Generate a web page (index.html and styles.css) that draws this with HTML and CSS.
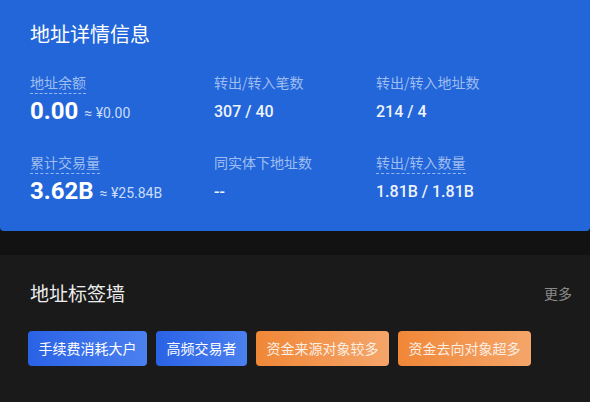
FILE: index.html
```html
<!DOCTYPE html>
<html lang="zh">
<head>
<meta charset="utf-8">
<link rel="stylesheet" href="styles.css">
</head>
<body>
<section class="detail">
  <h1 class="title">地址详情信息</h1>
  <div class="grid">
    <div class="cell">
      <div class="label dashed">地址余额</div>
      <div class="value"><span class="big">0.00</span><span class="approx">≈ ¥0.00</span></div>
    </div>
    <div class="cell">
      <div class="label">转出/转入笔数</div>
      <div class="value"><span class="mid">307 / 40</span></div>
    </div>
    <div class="cell">
      <div class="label">转出/转入地址数</div>
      <div class="value"><span class="mid">214 / 4</span></div>
    </div>
    <div class="cell">
      <div class="label dashed">累计交易量</div>
      <div class="value"><span class="big">3.62B</span><span class="approx">≈ ¥25.84B</span></div>
    </div>
    <div class="cell">
      <div class="label">同实体下地址数</div>
      <div class="value"><span class="mid">--</span></div>
    </div>
    <div class="cell">
      <div class="label dashed">转出/转入数量</div>
      <div class="value"><span class="mid">1.81B / 1.81B</span></div>
    </div>
  </div>
</section>
<section class="tags-card">
  <div class="tags-head">
    <h2 class="tags-title">地址标签墙</h2>
    <span class="more">更多</span>
  </div>
  <div class="tags">
    <span class="tag blue">手续费消耗大户</span>
    <span class="tag blue">高频交易者</span>
    <span class="tag orange">资金来源对象较多</span>
    <span class="tag orange">资金去向对象超多</span>
  </div>
</section>
</body>
</html>
```
FILE: styles.css
```css
html, body {
  margin: 0;
  padding: 0;
}
body {
  background: #121212;
  font-family: "Noto Sans CJK SC", "Noto Sans", sans-serif;
  width: 590px;
  height: 402px;
  overflow: hidden;
}
.detail {
  background: #2266d9;
  height: 231px;
  box-sizing: border-box;
  padding: 20px 30px 0 30px;
  border-radius: 0 0 4px 4px;
}
.title {
  margin: 0;
  font-size: 20px;
  line-height: 28px;
  font-weight: 400;
  color: #ffffff;
}
.grid {
  margin-top: 24px;
  display: grid;
  grid-template-columns: 184px 162px 1fr;
  row-gap: 27px;
}
.cell {
  display: flex;
  flex-direction: column;
  align-items: flex-start;
}
.label {
  font-size: 14px;
  line-height: 20px;
  color: #9fbdf0;
  padding-bottom: 1px;
  border-bottom: 1px solid transparent;
}
.label.dashed {
  border-bottom: 1px dashed rgba(190, 212, 250, 0.75);
}
.value {
  margin-top: 3px;
  height: 28px;
  display: flex;
  align-items: center;
  color: #ffffff;
  font-family: Roboto, "Noto Sans", sans-serif;
}
.big {
  font-size: 24px;
  font-weight: 700;
}
.approx {
  margin-left: 6px;
  font-size: 14px;
  color: #c9dbfa;
  margin-top: 3px;
}
.mid {
  font-size: 16px;
  font-weight: 500;
  color: #eef3fc;
}
.tags-card {
  margin-top: 24px;
  background: #1a1a1a;
  height: 147px;
  padding: 24px 18px 0 30px;
  box-sizing: border-box;
}
.tags-head {
  display: flex;
  justify-content: space-between;
  align-items: center;
}
.tags-title {
  margin: 0;
  font-size: 19px;
  line-height: 28px;
  font-weight: 400;
  color: #eeeeee;
}
.more {
  font-size: 14px;
  color: #8a8a8a;
}
.tags {
  margin-top: 24px;
  margin-left: -2px;
  display: flex;
  gap: 9px;
}
.tag {
  height: 35px;
  line-height: 35px;
  padding: 0 10.5px;
  font-size: 14px;
  border-radius: 4px;
  color: #ffffff;
}
.tag.blue {
  background: linear-gradient(90deg, #2a62e6, #4b80ef);
}
.tag.orange {
  background: linear-gradient(90deg, #f08737, #f5a56a);
  color: #fbeee2;
}
```
